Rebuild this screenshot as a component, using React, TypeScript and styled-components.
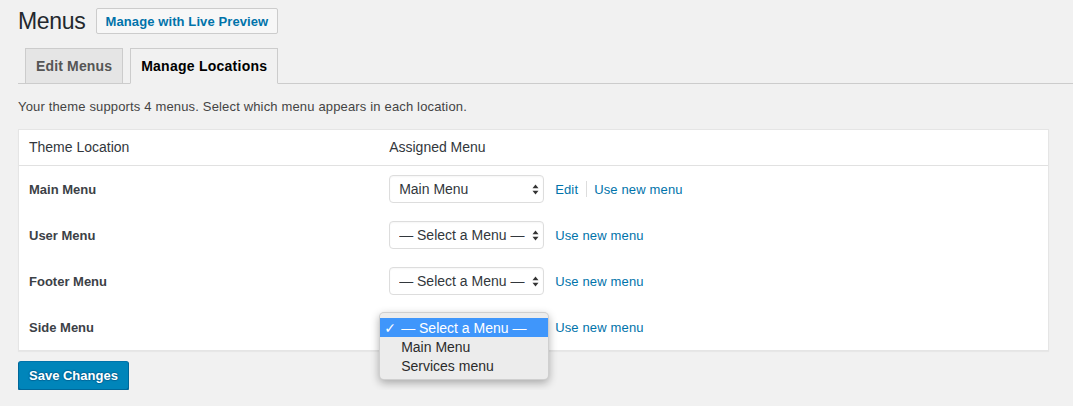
import React from "react";
import styled, { createGlobalStyle } from "styled-components";

const GlobalStyle = createGlobalStyle`
  html, body {
    margin: 0;
    padding: 0;
    background: #f1f1f1;
  }
  body {
    font-family: "Liberation Sans", Arial, sans-serif;
    font-size: 13px;
    color: #444;
  }
  * { box-sizing: border-box; }
`;

const Page = styled.div`
  padding: 8px 24px 0 18px;
`;

const Header = styled.div`
  display: flex;
  align-items: center;
  gap: 10px;
  height: 26px;
`;

const Title = styled.h1`
  margin: 0;
  font-size: 23px;
  font-weight: 400;
  line-height: 29px;
  letter-spacing: -0.3px;
  color: #23282d;
`;

const PreviewButton = styled.button`
  height: 26px;
  padding: 0 9px;
  border: 1px solid #ccc;
  border-radius: 2px;
  background: #f7f7f7;
  color: #0073aa;
  font-family: inherit;
  font-size: 13px;
  font-weight: 700;
  letter-spacing: 0.1px;
  cursor: pointer;
`;

const TabBar = styled.nav`
  display: flex;
  margin: 14px -24px 0 0;
  border-bottom: 1px solid #ccc;
`;

const Tab = styled.a<{ $active?: boolean }>`
  margin-left: 7px;
  margin-bottom: -1px;
  padding: 5px 10px;
  border: 1px solid #ccc;
  border-bottom-color: ${(p) => (p.$active ? "#f1f1f1" : "#ccc")};
  background: ${(p) => (p.$active ? "#f1f1f1" : "#e5e5e5")};
  color: ${(p) => (p.$active ? "#000" : "#555")};
  font-size: 14px;
  font-weight: 700;
  line-height: 24px;
  letter-spacing: ${(p) => (p.$active ? "0.25px" : "0.15px")};
  text-decoration: none;
`;

const Intro = styled.p`
  margin: 13px 0 12px;
  font-size: 13px;
  line-height: 20px;
  letter-spacing: 0.16px;
  color: #444;
`;

const Table = styled.div`
  background: #fff;
  border: 1px solid #e5e5e5;
  box-shadow: 0 1px 1px rgba(0, 0, 0, 0.04);
`;

const HeadRow = styled.div`
  display: grid;
  grid-template-columns: 35% 65%;
  border-bottom: 1px solid #e1e1e1;
`;

const HeadCell = styled.div`
  padding: 8px 10px 9px;
  font-size: 14px;
  line-height: 18px;
  color: #32373c;
`;

const Row = styled.div`
  display: grid;
  grid-template-columns: 35% 65%;
  align-items: center;
  height: 46px;
`;

const LocationName = styled.div`
  padding: 0 10px;
  font-size: 13px;
  font-weight: 700;
  color: #3c4146;
`;

const AssignCell = styled.div`
  display: flex;
  align-items: center;
  padding: 0 10px;
`;

const SelectWrap = styled.div`
  position: relative;
  width: 155px;
  height: 28px;
  flex: none;
`;

const NativeSelect = styled.select`
  appearance: none;
  -webkit-appearance: none;
  width: 100%;
  height: 28px;
  padding: 0 18px 0 9px;
  border: 1px solid #ddd;
  border-radius: 4px;
  background: #fff;
  box-shadow: inset 0 1px 2px rgba(0, 0, 0, 0.04);
  color: #32373c;
  font-family: inherit;
  font-size: 14px;
  outline: none;
`;

const ArrowIcon = styled.svg`
  position: absolute;
  right: 5px;
  top: 9px;
  pointer-events: none;
`;

const Links = styled.div`
  display: flex;
  align-items: center;
  margin-left: 11px;
`;

const Link = styled.a`
  color: #0073aa;
  font-size: 13px;
  letter-spacing: 0.15px;
  text-decoration: none;
`;

const Sep = styled.span`
  width: 1px;
  height: 16px;
  background: #ddd;
  margin: 0 7px 0 8px;
`;

const Popup = styled.div`
  position: absolute;
  top: -1px;
  left: -10px;
  width: 170px;
  padding: 5px 0 4px;
  background: #ececec;
  border: 1px solid rgba(0, 0, 0, 0.12);
  border-radius: 5px;
  box-shadow: 0 3px 9px rgba(0, 0, 0, 0.3);
  z-index: 5;
`;

const Option = styled.div<{ $selected?: boolean }>`
  display: flex;
  align-items: center;
  height: 19px;
  background: ${(p) => (p.$selected ? "#3f96fb" : "transparent")};
  color: ${(p) => (p.$selected ? "#fff" : "#2b2b2b")};
  font-size: 14px;
`;

const CheckSlot = styled.span`
  width: 21px;
  padding-left: 4px;
  font-family: "DejaVu Sans", sans-serif;
  font-size: 14px;
`;

const Footer = styled.div`
  margin-top: 10px;
`;

const PrimaryButton = styled.button`
  height: 29px;
  padding: 0 10px 1px;
  border: 1px solid;
  border-color: #0073aa #006799 #006799;
  border-radius: 3px;
  background: #0085ba;
  box-shadow: 0 1px 0 #006799;
  color: #fff;
  text-shadow: 0 -1px 1px #006799, 1px 0 1px #006799, 0 1px 1px #006799, -1px 0 1px #006799;
  font-family: inherit;
  font-size: 13px;
  font-weight: 700;
  cursor: pointer;
`;

const Arrow = () => (
  <ArrowIcon width="7" height="11" viewBox="0 0 7 11">
    <path d="M3.5 0.5 L6.5 4.2 L0.5 4.2 Z" fill="#333" />
    <path d="M3.5 10.5 L6.5 6.8 L0.5 6.8 Z" fill="#333" />
  </ArrowIcon>
);

type Loc = { name: string; value: string; edit?: boolean; open?: boolean };

const locations: Loc[] = [
  { name: "Main Menu", value: "Main Menu", edit: true },
  { name: "User Menu", value: "— Select a Menu —" },
  { name: "Footer Menu", value: "— Select a Menu —" },
  { name: "Side Menu", value: "— Select a Menu —", open: true },
];

const options = ["— Select a Menu —", "Main Menu", "Services menu"];

export default function App() {
  return (
    <>
      <GlobalStyle />
      <Page>
        <Header>
          <Title>Menus</Title>
          <PreviewButton>Manage with Live Preview</PreviewButton>
        </Header>
        <TabBar>
          <Tab href="#">Edit Menus</Tab>
          <Tab href="#" $active>
            Manage Locations
          </Tab>
        </TabBar>
        <Intro>Your theme supports 4 menus. Select which menu appears in each location.</Intro>
        <Table>
          <HeadRow>
            <HeadCell>Theme Location</HeadCell>
            <HeadCell>Assigned Menu</HeadCell>
          </HeadRow>
          {locations.map((loc) => (
            <Row key={loc.name}>
              <LocationName>{loc.name}</LocationName>
              <AssignCell>
                <SelectWrap>
                  <NativeSelect defaultValue={loc.value}>
                    {options.map((o) => (
                      <option key={o}>{o}</option>
                    ))}
                  </NativeSelect>
                  <Arrow />
                  {loc.open && (
                    <Popup>
                      {options.map((o) => (
                        <Option key={o} $selected={o === loc.value}>
                          <CheckSlot>{o === loc.value ? "✓" : ""}</CheckSlot>
                          {o}
                        </Option>
                      ))}
                    </Popup>
                  )}
                </SelectWrap>
                <Links>
                  {loc.edit && (
                    <>
                      <Link href="#">Edit</Link>
                      <Sep />
                    </>
                  )}
                  <Link href="#">Use new menu</Link>
                </Links>
              </AssignCell>
            </Row>
          ))}
        </Table>
        <Footer>
          <PrimaryButton>Save Changes</PrimaryButton>
        </Footer>
      </Page>
    </>
  );
}
